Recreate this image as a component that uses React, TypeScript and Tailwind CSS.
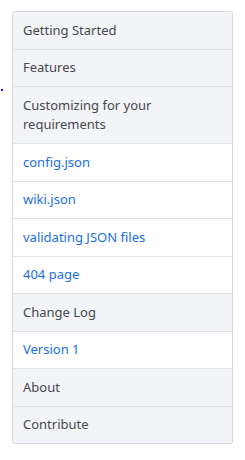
const items = [
  { label: 'Getting Started', head: true },
  { label: 'Features', head: true },
  { label: 'Customizing for your requirements', head: true },
  { label: 'config.json' },
  { label: 'wiki.json' },
  { label: 'validating JSON files' },
  { label: '404 page' },
  { label: 'Change Log', head: true },
  { label: 'Version 1' },
  { label: 'About', head: true },
  { label: 'Contribute', head: true },
];

export default function App() {
  return (
    <div className="relative w-[245px] h-[460px] bg-white pt-[11px] pl-[12px] font-['Noto_Sans',sans-serif] text-[13px] leading-[19.5px]">
      {/* stray dot at the left edge */}
      <span className="absolute left-[1px] top-[89px] w-[2px] h-[2px] bg-[#1010ff]" />
      <nav className="w-[221px] flex flex-col border border-[#d6d8dd] rounded-[3px] overflow-hidden">
        {items.map((item, i) => (
          <a
            key={item.label}
            href="#"
            className={`block px-[10px] py-[8.5px] ${i > 0 ? 'border-t border-[#e1e3e7]' : ''} ${
              item.head ? 'bg-[#f3f4f7] text-[#45484d]' : 'bg-white text-[#1a6fdf]'
            }`}
          >
            {item.label}
          </a>
        ))}
      </nav>
    </div>
  );
}
